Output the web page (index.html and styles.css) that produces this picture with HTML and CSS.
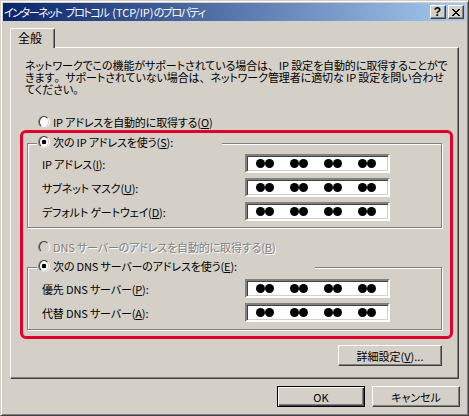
FILE: index.html
```html
<!DOCTYPE html>
<html lang="ja">
<head>
<meta charset="utf-8">
<title>インターネット プロトコル (TCP/IP)のプロパティ</title>
<link rel="stylesheet" href="styles.css">
</head>
<body>
<div class="window">
  <div class="titlebar">
    <span class="title">インターネット プロトコル <span class="latin">(TCP/IP)</span>のプロパティ</span>
    <div class="tbtns">
      <span class="tbtn help">?</span>
      <span class="tbtn close"><svg width="8" height="7" viewBox="0 0 8 7"><path fill="#000" d="M0 0h2v1H0zM6 0h2v1H6zM1 1h2v1H1zM5 1h2v1H5zM2 2h4v1H2zM3 3h2v1H3zM2 4h4v1H2zM1 5h2v1H1zM5 5h2v1H5zM0 6h2v1H0zM6 6h2v1H6z"/></svg></span>
    </div>
  </div>
  <div class="client">
    <div class="tabs"><div class="tab">全般</div></div>
    <div class="panel">
      <p class="intro">ネットワークでこの機能がサポートされている場合は<span class="fw">、</span>IP 設定を自動的に取得することがで<br>きます<span class="fw">。</span>サポートされていない場合は<span class="fw">、</span>ネットワーク管理者に適切な IP 設定を問い合わせ<br>てください<span class="fw">。</span></p>
      <div class="radio r-ipauto"><span class="rb"></span><span class="rt">IP アドレスを自動的に取得する(<u>O</u>)</span></div>
      <div class="group g1">
        <div class="legend l1"><span class="rb checked"></span><span class="rt">次の IP アドレスを使う(<u>S</u>):</span></div>
        <div class="field f-first1"><span class="lbl">IP アドレス(<u>I</u>):</span><span class="ipbox"><span class="pair"><i></i><i></i></span><span class="pair"><i></i><i></i></span><span class="pair"><i></i><i></i></span><span class="pair"><i></i><i></i></span></span></div>
        <div class="field"><span class="lbl">サブネット マスク(<u>U</u>):</span><span class="ipbox"><span class="pair"><i></i><i></i></span><span class="pair"><i></i><i></i></span><span class="pair"><i></i><i></i></span><span class="pair"><i></i><i></i></span></span></div>
        <div class="field"><span class="lbl">デフォルト ゲートウェイ(<u>D</u>):</span><span class="ipbox"><span class="pair"><i></i><i></i></span><span class="pair"><i></i><i></i></span><span class="pair"><i></i><i></i></span><span class="pair"><i></i><i></i></span></span></div>
      </div>
      <div class="radio r-dnsauto disabled"><span class="rb"></span><span class="rt">DNS サーバーのアドレスを自動的に取得する(<u>B</u>)</span></div>
      <div class="group g2">
        <div class="legend l2"><span class="rb checked"></span><span class="rt">次の DNS サーバーのアドレスを使う(<u>E</u>):</span></div>
        <div class="field f-first2"><span class="lbl">優先 DNS サーバー(<u>P</u>):</span><span class="ipbox"><span class="pair"><i></i><i></i></span><span class="pair"><i></i><i></i></span><span class="pair"><i></i><i></i></span><span class="pair"><i></i><i></i></span></span></div>
        <div class="field"><span class="lbl">代替 DNS サーバー(<u>A</u>):</span><span class="ipbox"><span class="pair"><i></i><i></i></span><span class="pair"><i></i><i></i></span><span class="pair"><i></i><i></i></span><span class="pair"><i></i><i></i></span></span></div>
      </div>
      <div class="adv-row"><button class="btn adv">詳細設定(<u>V</u>)...</button></div>
    </div>
    <div class="footer">
      <button class="btn default">OK</button>
      <button class="btn">キャンセル</button>
    </div>
  </div>
  <div class="highlight"></div>
</div>
</body>
</html>
```
FILE: styles.css
```css
* { box-sizing: border-box; }
html, body { margin: 0; padding: 0; }
body {
  background: #d4d0c8;
  font-family: "Noto Sans CJK JP", "MS UI Gothic", sans-serif;
  font-size: 11px;
  line-height: 12px;
  color: #000;
  font-feature-settings: "palt";
}
u { text-decoration: underline; text-underline-offset: 1px; }
.fw { font-feature-settings: normal; }

.window {
  position: relative;
  width: 469px;
  height: 416px;
  background: #d4d0c8;
  border: 1px solid;
  border-color: #d4d0c8 #404040 #404040 #d4d0c8;
  box-shadow: inset 1px 1px #fff, inset -1px -1px #808080;
  padding: 2px;
  display: flex;
  flex-direction: column;
}

.titlebar {
  height: 18px;
  flex: none;
  display: flex;
  align-items: center;
  justify-content: space-between;
  padding: 0 2px 0 1px;
  background: linear-gradient(to right, #0a246a, #a6caf0);
  color: #fff;
}
.title { white-space: nowrap; letter-spacing: -1.45px; word-spacing: 3px; }
.title .latin { letter-spacing: 0; }
.tbtns { display: flex; gap: 2px; }
.tbtn {
  width: 16px;
  height: 14px;
  background: #d4d0c8;
  border: 1px solid;
  border-color: #fff #404040 #404040 #fff;
  box-shadow: inset -1px -1px #808080;
  display: flex;
  align-items: center;
  justify-content: center;
  color: #000;
}
.help {
  font-family: "Liberation Sans", Arial, sans-serif;
  font-weight: bold;
  font-size: 12px;
  line-height: 12px;
  padding-right: 1px;
}
.close svg { display: block; margin-right: 1px; }

.client {
  flex: 1;
  padding: 7px 7px 0 7px;
  display: flex;
  flex-direction: column;
}
.tabs { height: 19px; display: flex; flex: none; }
.tab {
  position: relative;
  z-index: 1;
  width: 45px;
  height: 20px;
  margin-bottom: -1px;
  background: #d4d0c8;
  border-top: 1px solid #fff;
  border-left: 1px solid #fff;
  border-right: 1px solid #404040;
  box-shadow: inset -1px 0 #808080;
  border-radius: 2px 2px 0 0;
  padding: 3px 0 0 7px;
  font-size: 12px;
}
.panel {
  height: 332px;
  flex: none;
  border: 1px solid;
  border-color: #fff #404040 #404040 #fff;
  box-shadow: inset -1px -1px #808080;
  display: flex;
  flex-direction: column;
}
.intro {
  margin: 11px 0 0 14px;
  white-space: nowrap;
  line-height: 12px;
  letter-spacing: -0.1px;
}

.radio {
  height: 16px;
  display: flex;
  align-items: center;
  gap: 3px;
  padding-left: 27px;
  white-space: nowrap;
}
.r-ipauto { margin-top: 19px; }
.r-dnsauto { margin-top: 11px; }
.rt, .lbl { letter-spacing: -0.15px; }
.disabled .rt { color: #808080; text-shadow: 1px 1px 0 #fff; }
.disabled .rt u { text-decoration-color: #808080; }

.rb {
  flex: none;
  width: 12px;
  height: 12px;
  border-radius: 50%;
  border: 1px solid;
  border-color: #808080 #fff #fff #808080;
  display: flex;
  align-items: center;
  justify-content: center;
}
.rb::before {
  content: "";
  width: 10px;
  height: 10px;
  border-radius: 50%;
  border: 1px solid;
  border-color: #404040 #d4d0c8 #d4d0c8 #404040;
  background: #fff;
}
.rb.checked::before {
  background: radial-gradient(circle, #000 0 2px, #fff 2.6px);
}
.disabled .rb::before { background: #d4d0c8; }

.group {
  width: 415px;
  margin-left: 16px;
  border: 1px solid #808080;
  box-shadow: inset 1px 1px #fff, 1px 1px #fff;
}
.g1 { margin-top: 13px; padding-bottom: 6px; }
.g2 { margin-top: 12px; padding-bottom: 7px; }
.legend {
  height: 16px;
  margin-top: -10px;
  margin-left: 9px;
  padding-left: 1px;
  background: #d4d0c8;
  display: flex;
  align-items: center;
  gap: 3px;
  white-space: nowrap;
}
.l1 { width: 185px; }
.l2 { width: 278px; }

.field {
  display: grid;
  grid-template-columns: 203px 145px;
  align-items: center;
  height: 19px;
  margin-top: 5px;
  padding-left: 14px;
}
.f-first1 { margin-top: 4px; }
.f-first2 { margin-top: 5px; }
.lbl { white-space: nowrap; }
.ipbox {
  height: 19px;
  background: #fff;
  border: 2px solid;
  border-color: #808080 #fff #fff #808080;
  box-shadow: inset 1px 1px #404040, inset -1px -1px #d4d0c8;
  display: flex;
  align-items: center;
  gap: 16px;
  padding: 0 0 1px 9px;
}
.pair { display: flex; }
.pair i {
  width: 9px;
  height: 9px;
  border-radius: 50%;
  background: #000;
}

.btn {
  font: inherit;
  font-feature-settings: "palt";
  color: #000;
  height: 21px;
  background: #d4d0c8;
  border: 1px solid;
  border-color: #fff #404040 #404040 #fff;
  box-shadow: inset -1px -1px #808080;
  padding: 0;
  margin: 0;
  display: flex;
  align-items: center;
  justify-content: center;
}
.adv-row {
  display: flex;
  justify-content: flex-end;
  margin-top: 15px;
  padding-right: 16px;
}
.adv { width: 104px; }
.footer {
  display: flex;
  justify-content: flex-end;
  gap: 7px;
  margin-top: 7px;
  margin-right: -1px;
}
.footer .btn { width: 88px; }
.btn.default {
  border: 1px solid #000;
  box-shadow: inset 1px 1px #fff, inset -1px -1px #404040, inset -2px -2px #808080;
}

.highlight {
  position: absolute;
  left: 19px;
  top: 129px;
  width: 433px;
  height: 209px;
  border: 3px solid #e0002a;
  border-radius: 6px;
  pointer-events: none;
}
```
